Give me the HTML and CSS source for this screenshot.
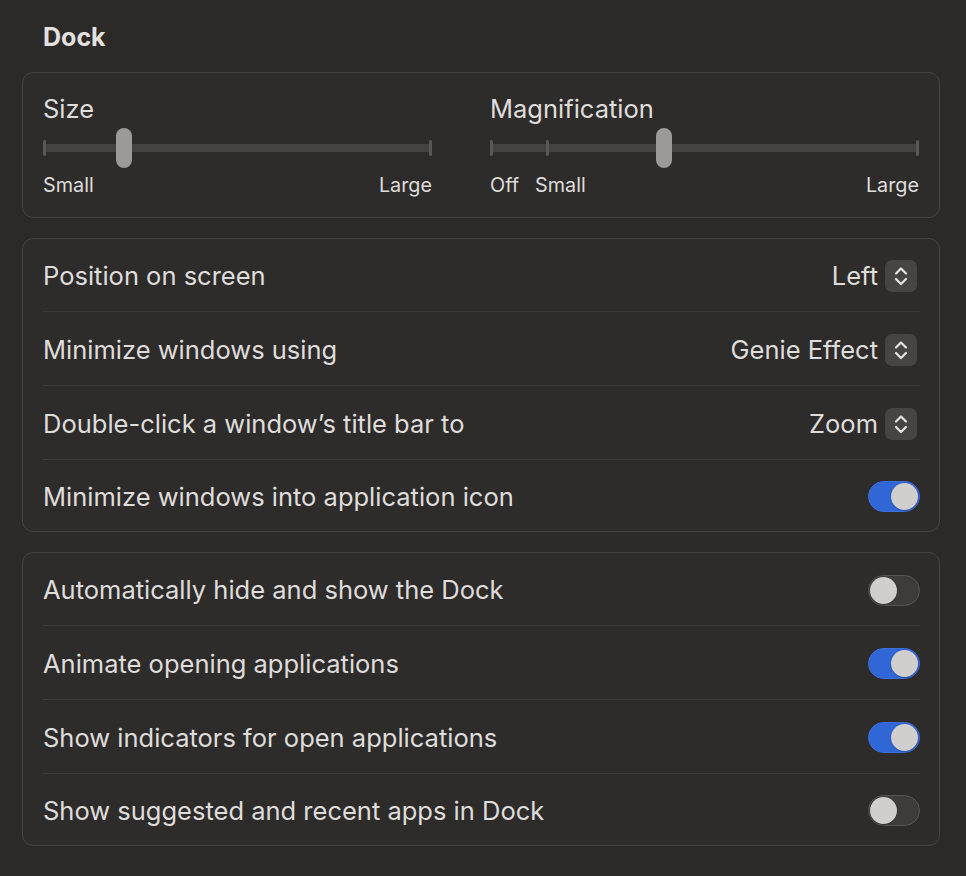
FILE: index.html
```html
<!DOCTYPE html>
<html lang="en">
<head>
<meta charset="utf-8">
<title>Dock</title>
<link rel="stylesheet" href="styles.css">
</head>
<body>
<main class="page">
  <h1 class="title">Dock</h1>

  <section class="card sliders">
    <div class="slider-group size">
      <div class="slider-label">Size</div>
      <div class="slider">
        <div class="track"></div>
        <span class="tick" style="left:0px"></span>
        <span class="tick" style="left:386px"></span>
        <span class="thumb" style="left:73px"></span>
      </div>
      <div class="scale">
        <span>Small</span>
        <span class="spacer"></span>
        <span>Large</span>
      </div>
    </div>
    <div class="slider-group mag">
      <div class="slider-label">Magnification</div>
      <div class="slider">
        <div class="track"></div>
        <span class="tick" style="left:0px"></span>
        <span class="tick" style="left:56px"></span>
        <span class="tick" style="left:426px"></span>
        <span class="thumb" style="left:166px"></span>
      </div>
      <div class="scale">
        <span>Off</span>
        <span class="small-lbl">Small</span>
        <span class="spacer"></span>
        <span>Large</span>
      </div>
    </div>
  </section>

  <section class="card list">
    <div class="row">
      <span class="row-label">Position on screen</span>
      <div class="popup">
        <span class="popup-value">Left</span>
        <span class="stepper"><svg viewBox="0 0 32 32" width="32" height="32"><path d="M11 13.5 L16 8.5 L21 13.5 M11 19 L16 24 L21 19" fill="none" stroke="#e6e4e2" stroke-width="2.2" stroke-linecap="round" stroke-linejoin="round"/></svg></span>
      </div>
    </div>
    <div class="row">
      <span class="row-label">Minimize windows using</span>
      <div class="popup">
        <span class="popup-value">Genie Effect</span>
        <span class="stepper"><svg viewBox="0 0 32 32" width="32" height="32"><path d="M11 13.5 L16 8.5 L21 13.5 M11 19 L16 24 L21 19" fill="none" stroke="#e6e4e2" stroke-width="2.2" stroke-linecap="round" stroke-linejoin="round"/></svg></span>
      </div>
    </div>
    <div class="row">
      <span class="row-label">Double-click a window’s title bar to</span>
      <div class="popup">
        <span class="popup-value">Zoom</span>
        <span class="stepper"><svg viewBox="0 0 32 32" width="32" height="32"><path d="M11 13.5 L16 8.5 L21 13.5 M11 19 L16 24 L21 19" fill="none" stroke="#e6e4e2" stroke-width="2.2" stroke-linecap="round" stroke-linejoin="round"/></svg></span>
      </div>
    </div>
    <div class="row">
      <span class="row-label">Minimize windows into application icon</span>
      <span class="toggle on"><span class="knob"></span></span>
    </div>
  </section>

  <section class="card list">
    <div class="row">
      <span class="row-label">Automatically hide and show the Dock</span>
      <span class="toggle"><span class="knob"></span></span>
    </div>
    <div class="row">
      <span class="row-label">Animate opening applications</span>
      <span class="toggle on"><span class="knob"></span></span>
    </div>
    <div class="row">
      <span class="row-label">Show indicators for open applications</span>
      <span class="toggle on"><span class="knob"></span></span>
    </div>
    <div class="row">
      <span class="row-label">Show suggested and recent apps in Dock</span>
      <span class="toggle"><span class="knob"></span></span>
    </div>
  </section>
</main>
</body>
</html>
```

FILE: styles.css
```css
* { box-sizing: border-box; }

html, body {
  margin: 0;
  padding: 0;
  background: #2c2a29;
}

body {
  font-family: Inter, "Noto Sans", "Liberation Sans", sans-serif;
  color: #dfdddb;
  width: 966px;
  height: 876px;
  overflow: hidden;
}

.page {
  padding: 22px 26px 0 22px;
  display: flex;
  flex-direction: column;
}

.title {
  margin: 0 0 20px 21px;
  font-size: 25px;
  line-height: 30px;
  font-weight: 700;
  color: #e3e1df;
  letter-spacing: 0;
}

.card {
  background: #2e2c2b;
  border: 1px solid #464442;
  border-radius: 11px;
}

.card + .card { margin-top: 20px; }

/* sliders card */
.sliders {
  display: grid;
  grid-template-columns: 389px 429px;
  column-gap: 58px;
  padding: 21px 19px 20px 20px;
}

.slider-label {
  font-size: 25.5px;
  line-height: 30px;
  letter-spacing: 0;
}

.slider {
  position: relative;
  height: 40px;
  margin-top: 4px;
}

.track {
  position: absolute;
  left: 0;
  right: 0;
  top: 16px;
  height: 8px;
  background: #454341;
}

.tick {
  position: absolute;
  top: 12px;
  width: 3px;
  height: 16px;
  border-radius: 1.5px;
  background: #5a5856;
}

.thumb {
  position: absolute;
  top: 0;
  width: 16px;
  height: 40px;
  border-radius: 8px;
  background: #9b9a98;
}

.scale {
  display: flex;
  margin-top: 5px;
  font-size: 19.8px;
  line-height: 24px;
}

.scale .spacer { flex: 1; }
.scale .small-lbl { margin-left: 16px; }

/* list cards */
.list {
  display: flex;
  flex-direction: column;
  padding: 0 19px 0 20px;
}

.row {
  height: 74px;
  display: flex;
  align-items: center;
  justify-content: space-between;
  border-top: 1px solid #3d3b3a;
}

.row:first-child {
  border-top: none;
  height: 72px;
}

.row:last-child { height: 72px; }

.row-label {
  font-size: 25.5px;
  line-height: 30px;
  letter-spacing: 0;
  padding-top: 2px;
}

.popup {
  display: flex;
  align-items: center;
  gap: 7px;
  margin-right: 3px;
  margin-top: 2px;
}

.popup-value {
  font-size: 25.5px;
  line-height: 30px;
  letter-spacing: 0;
}

.stepper {
  width: 32px;
  height: 32px;
  border-radius: 7px;
  background: #474543;
  display: flex;
}

.toggle {
  position: relative;
  width: 52px;
  height: 31px;
  border-radius: 16px;
  background: #3e3c3b;
  border: 1px solid #575553;
  margin-top: 2px;
}

.toggle.on {
  background: #3066d6;
  border-color: #3b6fdc;
}

.knob {
  position: absolute;
  top: 1px;
  left: 1px;
  width: 27px;
  height: 27px;
  border-radius: 50%;
  background: #d0cfce;
  box-shadow: 0 0.5px 1.5px rgba(0,0,0,0.35);
}

.toggle.on .knob { left: 22px; }
```
